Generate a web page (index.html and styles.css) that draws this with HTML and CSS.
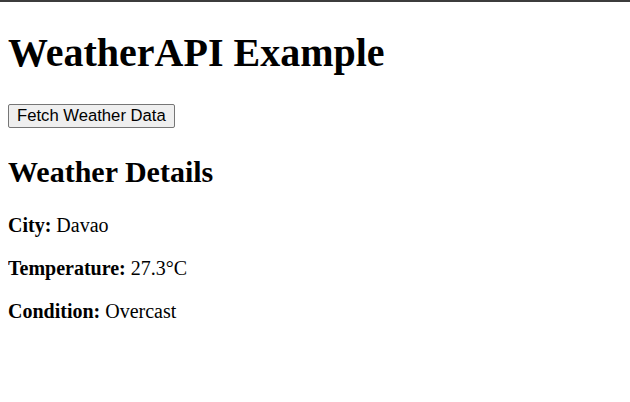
FILE: index.html
```html
<!DOCTYPE html>
<html>
<head>
<meta charset="utf-8">
<title>WeatherAPI Example</title>
<link rel="stylesheet" href="styles.css">
</head>
<body>
<h1>WeatherAPI Example</h1>
<button class="fetch">Fetch Weather Data</button>
<h2>Weather Details</h2>
<p><strong>City:</strong> Davao</p>
<p><strong>Temperature:</strong> 27.3°C</p>
<p><strong>Condition:</strong> Overcast</p>
</body>
</html>
```
FILE: styles.css
```css
html {
  margin: 0;
  padding: 0;
  background: #fff;
  border-top: 2px solid #3c3c3c;
}
body {
  margin: 0 8px 8px;
  font-family: "Liberation Serif", "Times New Roman", serif;
  font-size: 20px;
  color: #000;
}
h1 {
  font-size: 40px;
  margin: 26.8px 0;
}
h2 {
  font-size: 30px;
  margin: 27px 0 25px;
}
p {
  font-size: 20px;
  margin: 20px 0;
}
.fetch {
  font-family: "Liberation Sans", Arial, sans-serif;
  font-size: 16.67px;
  padding: 1px 8px;
  border: 1px solid #767676;
  border-radius: 2px;
  background: #efefef;
  color: #000;
}
```
